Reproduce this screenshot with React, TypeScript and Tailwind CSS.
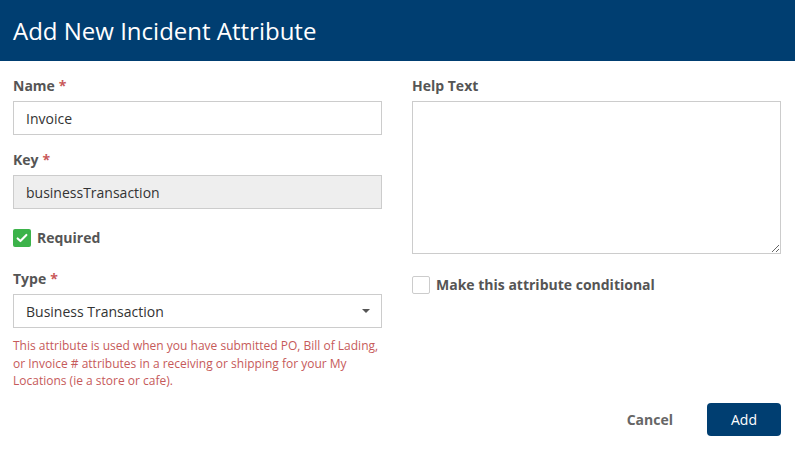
import { useState } from 'react';

const font = { fontFamily: '"Open Sans", "Noto Sans", sans-serif' };

function Label({ text, required }: { text: string; required?: boolean }) {
  return (
    <label className="block h-[30px] pt-[5px] text-[14px] font-bold leading-[20px] text-[#555]">
      {text}
      {required ? <span className="ml-1 text-[#c9595a]">*</span> : null}
    </label>
  );
}

function Check({ checked }: { checked: boolean }) {
  return (
    <span
      className={`flex h-[18px] w-[18px] items-center justify-center rounded-[2px] ${
        checked ? 'bg-[#3cb34a]' : 'border border-[#ccc] bg-white'
      }`}
    >
      {checked ? (
        <svg viewBox="0 0 16 16" className="h-[14px] w-[14px]" fill="none" stroke="white" strokeWidth="2.4" strokeLinecap="round" strokeLinejoin="round">
          <path d="M3 8.5l3.2 3L13 4.5" />
        </svg>
      ) : null}
    </span>
  );
}

export default function App() {
  const [required, setRequired] = useState(true);
  const [conditional, setConditional] = useState(false);

  return (
    <div className="h-[450px] w-[795px] overflow-hidden bg-white" style={font}>
      <div className="flex h-[61px] items-center bg-[#003e71] px-[13px]">
        <h1 className="text-[24px] font-normal leading-none text-white">Add New Incident Attribute</h1>
      </div>

      <div className="flex gap-[30px] pl-[13px] pr-[14px] pt-[10px]">
        <div className="w-[369px]">
          <Label text="Name" required />
          <input
            defaultValue="Invoice"
            className="h-[34px] w-full border border-[#ccc] px-3 text-[14px] text-[#333] outline-none"
          />
          <div className="h-[10px]" />
          <Label text="Key" required />
          <input
            defaultValue="businessTransaction"
            readOnly
            className="h-[34px] w-full border border-[#ccc] bg-[#eee] px-3 text-[14px] text-[#333] outline-none"
          />
          <button
            type="button"
            onClick={() => setRequired(!required)}
            className="mt-[19px] flex h-[20px] items-center gap-[6px]"
          >
            <Check checked={required} />
            <span className="text-[14px] font-bold leading-[20px] text-[#555]">Required</span>
          </button>
          <div className="h-[16px]" />
          <Label text="Type" required />
          <div className="relative">
            <select
              defaultValue="bt"
              className="h-[34px] w-full appearance-none border border-[#ccc] bg-white px-3 text-[14px] text-[#333] outline-none"
            >
              <option value="bt">Business Transaction</option>
            </select>
            <span className="pointer-events-none absolute right-[12px] top-1/2 -translate-y-1/2 border-x-[4px] border-t-[4px] border-x-transparent border-t-[#555]" />
          </div>
          <p className="mt-[9px] text-[12px] leading-[17.5px] text-[#c65a5a]">
            This attribute is used when you have submitted PO, Bill of Lading, or Invoice # attributes in a receiving or shipping for your My Locations (ie a store or cafe).
          </p>
        </div>

        <div className="w-[369px]">
          <Label text="Help Text" />
          <textarea className="block h-[153px] w-full resize-y border border-[#ccc] px-3 py-2 text-[14px] text-[#333] outline-none" />
          <button
            type="button"
            onClick={() => setConditional(!conditional)}
            className="mt-[21px] flex h-[20px] items-center gap-[6px]"
          >
            <Check checked={conditional} />
            <span className="text-[14px] font-bold leading-[20px] text-[#555]">Make this attribute conditional</span>
          </button>
        </div>
      </div>

      <div className="flex items-center justify-end gap-[34px] pr-[14px] pt-[13px]">
        <button type="button" className="text-[14px] font-bold text-[#666]">Cancel</button>
        <button type="button" className="h-[33px] w-[74px] rounded-[4px] bg-[#003e71] text-[14px] text-white">Add</button>
      </div>
    </div>
  );
}
